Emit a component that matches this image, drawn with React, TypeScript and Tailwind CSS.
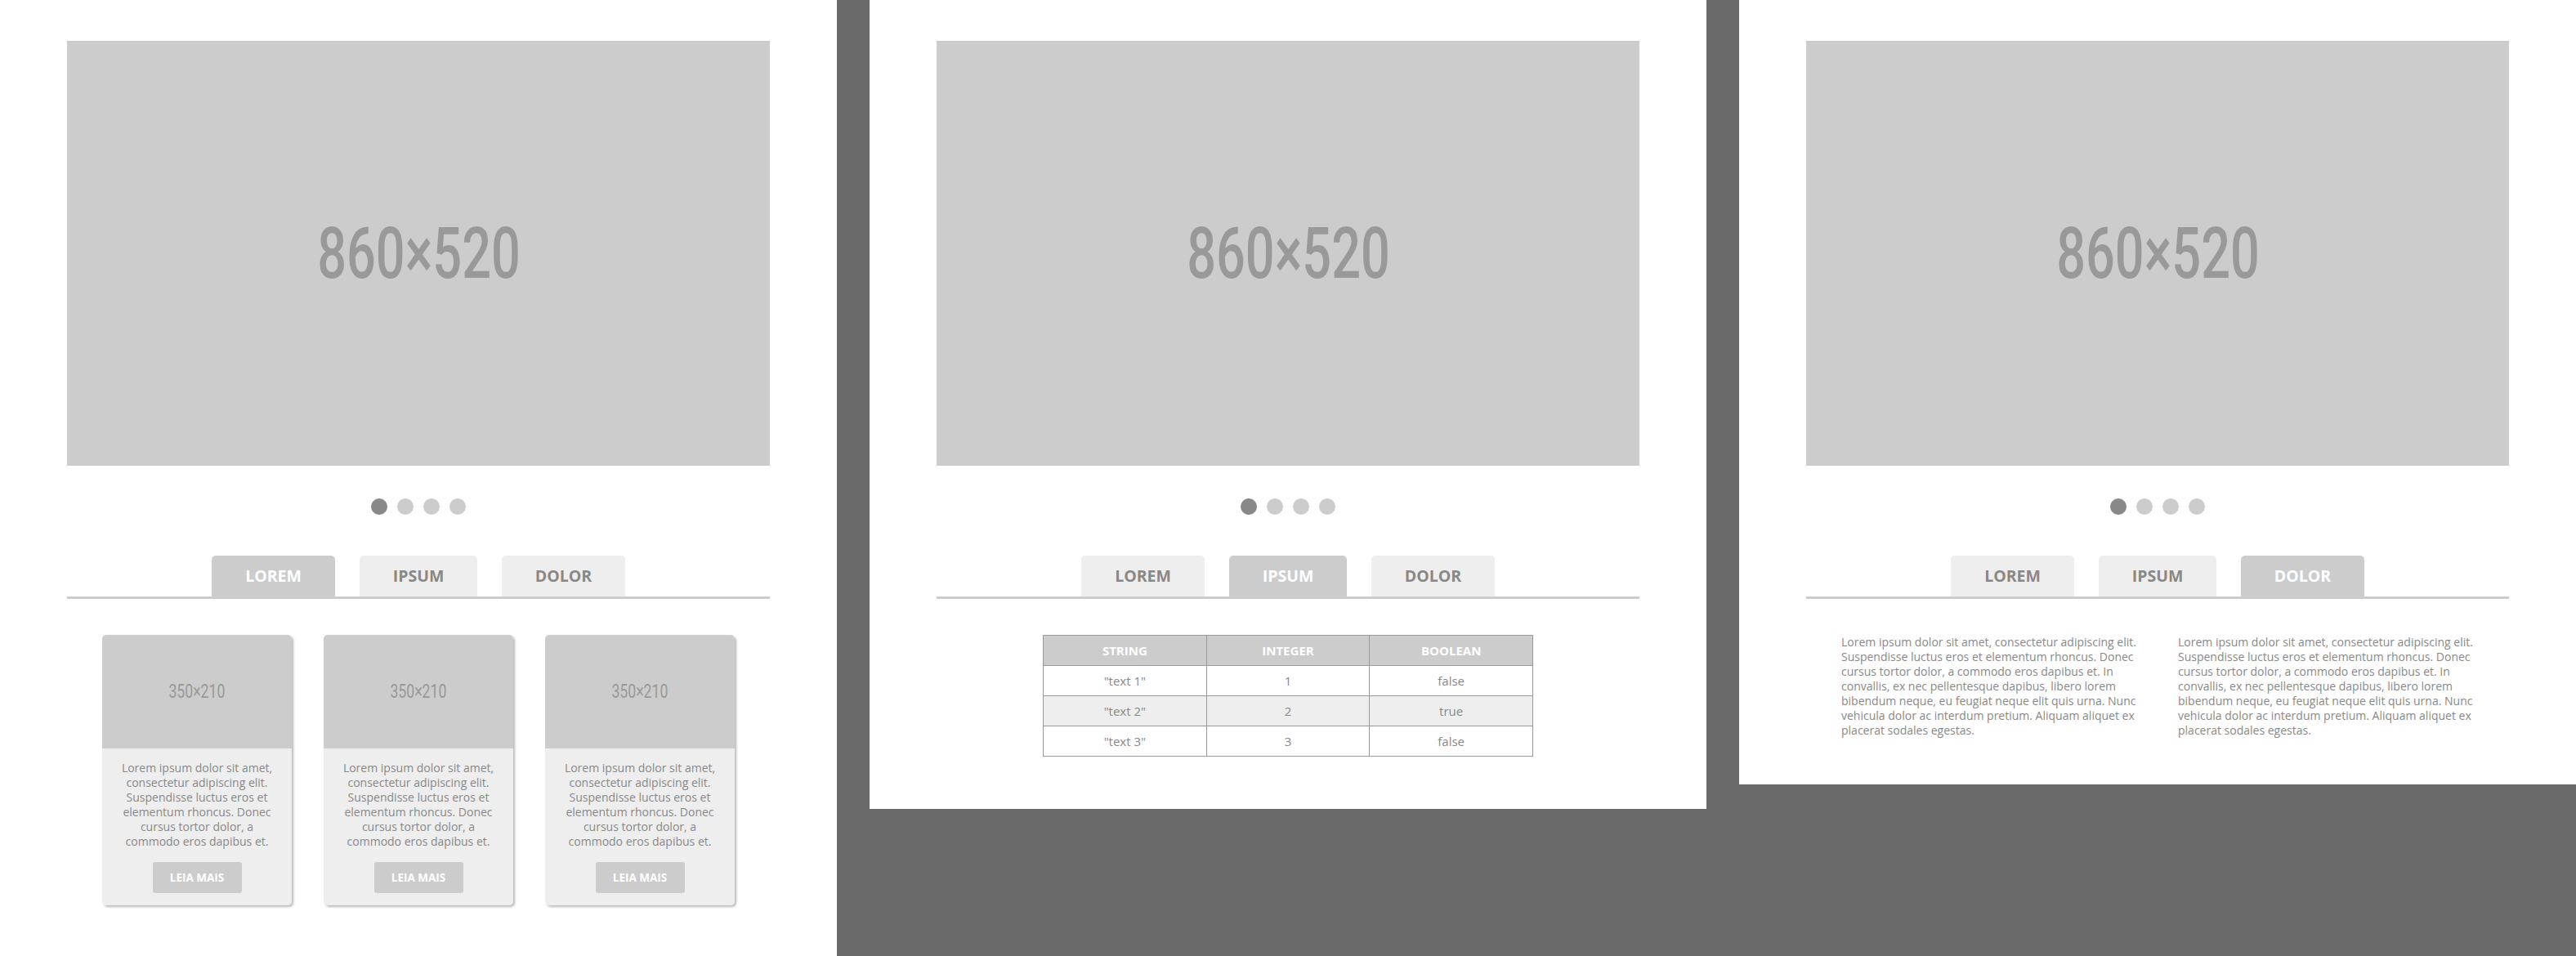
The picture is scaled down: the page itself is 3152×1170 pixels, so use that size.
import React from "react";

function BigLabel({ text }: { text: string }) {
  return (
    <span className="inline-block origin-center scale-x-[0.725] font-['Roboto',sans-serif] text-[87px] font-medium leading-none text-[#999999]">
      {text}
    </span>
  );
}

function SmallLabel({ text }: { text: string }) {
  return (
    <span className="inline-block origin-center scale-x-[0.72] font-['Roboto',sans-serif] text-[24.5px] font-normal leading-none text-[#999999]">
      {text}
    </span>
  );
}

function Hero() {
  return (
    <div className="mx-auto flex h-[520px] w-[860px] items-center justify-center bg-[#cccccc]">
      <BigLabel text="860×520" />
    </div>
  );
}

function Dots() {
  return (
    <div className="mt-[40px] flex justify-center gap-[12px]">
      <span className="h-[20px] w-[20px] rounded-full bg-[#888888]" />
      <span className="h-[20px] w-[20px] rounded-full bg-[#cccccc]" />
      <span className="h-[20px] w-[20px] rounded-full bg-[#cccccc]" />
      <span className="h-[20px] w-[20px] rounded-full bg-[#cccccc]" />
    </div>
  );
}

function Tabs({ active }: { active: number }) {
  const tabs = [
    { label: "LOREM", w: "w-[151px]" },
    { label: "IPSUM", w: "w-[144px]" },
    { label: "DOLOR", w: "w-[151px]" },
  ];
  return (
    <div className="mx-auto mt-[50px] w-[860px]">
      <div className="flex justify-center gap-[30px]">
        {tabs.map((t, i) => (
          <div
            key={t.label}
            className={
              "flex h-[50px] items-center justify-center rounded-t-[5px] text-[19.5px] font-bold " +
              t.w +
              " " +
              (i === active ? "bg-[#cccccc] text-white" : "bg-[#eeeeee] text-[#888888]")
            }
          >
            {t.label}
          </div>
        ))}
      </div>
      <div className="h-[3px] bg-[#cccccc]" />
    </div>
  );
}

const cardLines = [
  "Lorem ipsum dolor sit amet,",
  "consectetur adipiscing elit.",
  "Suspendisse luctus eros et",
  "elementum rhoncus. Donec",
  "cursus tortor dolor, a",
  "commodo eros dapibus et.",
];

function Card() {
  return (
    <div className="w-[232px] overflow-hidden rounded-[5px] shadow-[2px_2px_3px_rgba(0,0,0,0.28)]">
      <div className="flex h-[139px] items-center justify-center bg-[#cccccc]">
        <SmallLabel text="350×210" />
      </div>
      <div className="bg-[#eeeeee] pb-[15px] pt-[15px] text-center text-[14px] leading-[18px] text-[#888888]">
        {cardLines.map((l) => (
          <div key={l} className="whitespace-nowrap">
            {l}
          </div>
        ))}
        <div className="mx-auto mt-[16px] flex h-[38px] w-[109px] items-center justify-center rounded-[3px] bg-[#cccccc] text-[13.5px] font-bold text-white">
          LEIA MAIS
        </div>
      </div>
    </div>
  );
}

const paraLines = [
  "Lorem ipsum dolor sit amet, consectetur adipiscing elit.",
  "Suspendisse luctus eros et elementum rhoncus. Donec",
  "cursus tortor dolor, a commodo eros dapibus et. In",
  "convallis, ex nec pellentesque dapibus, libero lorem",
  "bibendum neque, eu feugiat neque elit quis urna. Nunc",
  "vehicula dolor ac interdum pretium. Aliquam aliquet ex",
  "placerat sodales egestas.",
];

function Para() {
  return (
    <div className="text-[14px] leading-[18px] text-[#888888]">
      {paraLines.map((l) => (
        <div key={l} className="whitespace-nowrap">
          {l}
        </div>
      ))}
    </div>
  );
}

function DataTable() {
  const rows = [
    ['"text 1"', "1", "false"],
    ['"text 2"', "2", "true"],
    ['"text 3"', "3", "false"],
  ];
  return (
    <table className="mx-auto w-[600px] table-fixed border-collapse text-center text-[15px]">
      <thead>
        <tr className="bg-[#cccccc]">
          <th className="h-[37px] border border-[#999999] p-0 font-bold text-white">STRING</th>
          <th className="h-[37px] border border-[#999999] p-0 font-bold text-white">INTEGER</th>
          <th className="h-[37px] border border-[#999999] p-0 font-bold text-white">BOOLEAN</th>
        </tr>
      </thead>
      <tbody>
        {rows.map((r, i) => (
          <tr key={i} className={i === 1 ? "bg-[#eeeeee]" : "bg-white"}>
            {r.map((c, j) => (
              <td key={j} className="h-[37px] border border-[#999999] p-0 font-normal text-[#888888]">
                {c}
              </td>
            ))}
          </tr>
        ))}
      </tbody>
    </table>
  );
}

export default function App() {
  return (
    <div className="flex h-[1170px] w-[3152px] items-start gap-[40px] overflow-hidden bg-[#696969] font-['Open_Sans',sans-serif]">
      <div className="h-[1170px] w-[1024px] shrink-0 bg-white pt-[50px]">
        <Hero />
        <Dots />
        <Tabs active={0} />
        <div className="mx-auto mt-[44px] flex w-[774px] justify-between">
          <Card />
          <Card />
          <Card />
        </div>
      </div>
      <div className="h-[990px] w-[1024px] shrink-0 bg-white pt-[50px]">
        <Hero />
        <Dots />
        <Tabs active={1} />
        <div className="mt-[44px]">
          <DataTable />
        </div>
      </div>
      <div className="h-[960px] w-[1024px] shrink-0 bg-white pt-[50px]">
        <Hero />
        <Dots />
        <Tabs active={2} />
        <div className="mx-auto mt-[44px] grid w-[774px] grid-cols-2 gap-x-[50px]">
          <Para />
          <Para />
        </div>
      </div>
    </div>
  );
}
